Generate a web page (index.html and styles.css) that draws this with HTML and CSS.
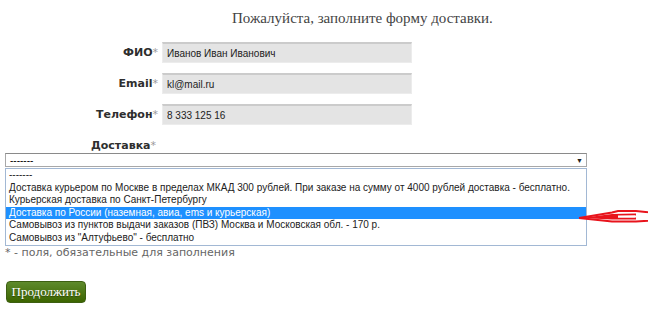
FILE: index.html
```html
<!DOCTYPE html>
<html lang="ru">
<head>
<meta charset="utf-8">
<title>Доставка</title>
<link rel="stylesheet" href="styles.css">
</head>
<body>
<div class="page">
  <h1 class="title">Пожалуйста, заполните форму доставки.</h1>
  <div class="fields">
    <label class="lbl">ФИО<span class="req">*</span></label>
    <input class="inp" type="text" value="Иванов Иван Иванович">
    <label class="lbl">Email<span class="req">*</span></label>
    <input class="inp" type="text" value="kl@mail.ru">
    <label class="lbl">Телефон<span class="req">*</span></label>
    <input class="inp" type="text" value="8 333 125 16">
  </div>
  <div class="delivery">
    <div class="dlbl">Доставка<span class="req">*</span></div>
    <div class="selwrap">
      <div class="select"><span>-------</span><span class="caret">▼</span></div>
      <ul class="list">
        <li>-------</li>
        <li>Доставка курьером по Москве в пределах МКАД 300 рублей. При заказе на сумму от 4000 рублей доставка - бесплатно.</li>
        <li>Курьерская доставка по Санкт-Петербургу</li>
        <li class="hl">Доставка по России (наземная, авиа, ems и курьерская)</li>
        <li>Самовывоз из пунктов выдачи заказов (ПВЗ) Москва и Московская обл. - 170 р.</li>
        <li>Самовывоз из "Алтуфьево" - бесплатно</li>
      </ul>
      <svg class="arrow" width="72" height="16" viewBox="0 0 72 16">
        <path d="M1 10 L34 4.5 L40 3 L58 3 L72 4.5" fill="none" stroke="#e8141c" stroke-width="2"/>
        <path d="M1 10 L34 13.5 L58 13.5 L72 12.5" fill="none" stroke="#e8141c" stroke-width="2"/>
        <path d="M3 10 L34 6 L58 5.5 L63 8.5 L58 11.5 L34 11.5 Z" fill="#e8141c"/>
        <path d="M40 7.6 L57 7.3 L60 8.5 L57 9.7 L40 9.7 Z" fill="#ffffff"/>
        <path d="M58 5 L72 5.5 L72 12 L58 12 Z" fill="#ffffff"/>
      </svg>
    </div>
  </div>
  <p class="note">* - поля, обязательные для заполнения</p>
  <button class="btn" type="button">Продолжить</button>
</div>
</body>
</html>
```
FILE: styles.css
```css
html, body {
  margin: 0;
  padding: 0;
  background: #ffffff;
}
.page {
  position: relative;
  font-family: "DejaVu Sans", Verdana, sans-serif;
  color: #333;
}
.title {
  margin: 0;
  padding: 9px 0 0 232px;
  font-family: "Liberation Serif", "Times New Roman", serif;
  font-weight: normal;
  font-size: 15px;
  line-height: 18px;
  color: #444;
}
.fields {
  display: grid;
  grid-template-columns: 158px 250px;
  column-gap: 4px;
  row-gap: 10px;
  margin-top: 15px;
  align-items: center;
}
.lbl {
  text-align: right;
  font-weight: bold;
  font-size: 11px;
  color: #2e2e2e;
}
.req {
  color: #999;
  font-weight: normal;
}
.inp {
  box-sizing: border-box;
  width: 250px;
  height: 21px;
  margin: 0;
  padding: 0 4px;
  border: 1px solid #ececec;
  border-top: 2px solid #cbcbcb;
  background: #e4e4e4;
  font-family: "Liberation Sans", Arial, sans-serif;
  font-size: 10px;
  color: #222;
  outline: none;
}
.delivery {
  margin-top: 14px;
}
.dlbl {
  padding-left: 91px;
  font-weight: bold;
  font-size: 11px;
  line-height: 13px;
  color: #2e2e2e;
}
.selwrap {
  position: relative;
  margin: 1px 0 0 5px;
  width: 582px;
}
.select {
  box-sizing: border-box;
  height: 14px;
  display: flex;
  justify-content: space-between;
  align-items: center;
  padding: 0 3px 0 4px;
  border: 1px solid #a8a8a8;
  border-top-color: #8a8a8a;
  background: #fff;
  font-family: "Liberation Sans", Arial, sans-serif;
  font-size: 10px;
  color: #000;
}
.caret {
  font-size: 7px;
  color: #222;
}
.list {
  box-sizing: border-box;
  list-style: none;
  margin: 1px 0 0 0;
  padding: 0;
  border: 1px solid #a2b8d4;
  background: #fff;
  font-family: "Liberation Sans", Arial, sans-serif;
  font-size: 10px;
  line-height: 12.6px;
  color: #222;
}
.list li {
  padding: 0 3px;
  white-space: nowrap;
}
.list li.hl {
  background: #1e90ff;
  color: #fff;
}
.arrow {
  position: absolute;
  left: 573px;
  top: 55px;
}
.note {
  margin: 1px 0 0 5px;
  font-size: 11px;
  line-height: 12px;
  color: #666;
}
.btn {
  display: block;
  margin: 22px 0 0 6px;
  width: 80px;
  height: 22px;
  padding: 0;
  border: 1px solid #3d5f12;
  border-radius: 4px;
  background: linear-gradient(#5e8a2c, #3c6500);
  font-family: "Liberation Serif", "Times New Roman", serif;
  font-size: 13px;
  color: #fff;
  text-shadow: 0 1px 1px rgba(0,0,0,0.4);
}
```
